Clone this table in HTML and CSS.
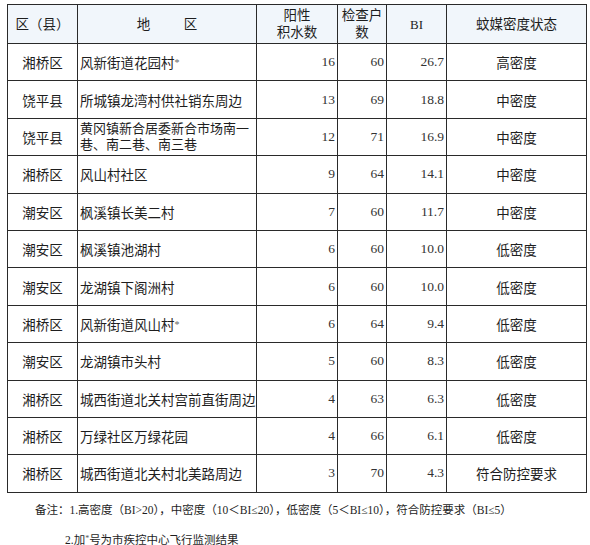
FILE: index.html
```html
<!DOCTYPE html>
<html lang="zh">
<head>
<meta charset="utf-8">
<title>蚊媒密度监测</title>
<link rel="stylesheet" href="styles.css">
</head>
<body>
<table class="grid">
  <colgroup>
    <col class="c1"><col class="c2"><col class="c3"><col class="c4"><col class="c5"><col class="c6">
  </colgroup>
  <thead>
    <tr class="head">
      <th>区（县）</th>
      <th>地&emsp;&emsp;&ensp;区</th>
      <th class="two">阳性<br>积水数</th>
      <th class="two">检查户<br>数</th>
      <th class="bi">BI</th>
      <th>蚊媒密度状态</th>
    </tr>
  </thead>
  <tbody>
    <tr><td class="ctr">湘桥区</td><td class="place">风新街道花园村<span class="star">*</span></td><td class="num">16</td><td class="num">60</td><td class="num">26.7</td><td class="ctr">高密度</td></tr>
    <tr><td class="ctr">饶平县</td><td class="place">所城镇龙湾村供社销东周边</td><td class="num">13</td><td class="num">69</td><td class="num">18.8</td><td class="ctr">中密度</td></tr>
    <tr><td class="ctr">饶平县</td><td class="place twoline">黄冈镇新合居委新合市场南一<br>巷、南二巷、南三巷</td><td class="num">12</td><td class="num">71</td><td class="num">16.9</td><td class="ctr">中密度</td></tr>
    <tr><td class="ctr">湘桥区</td><td class="place">风山村社区</td><td class="num">9</td><td class="num">64</td><td class="num">14.1</td><td class="ctr">中密度</td></tr>
    <tr><td class="ctr">潮安区</td><td class="place">枫溪镇长美二村</td><td class="num">7</td><td class="num">60</td><td class="num">11.7</td><td class="ctr">中密度</td></tr>
    <tr><td class="ctr">潮安区</td><td class="place">枫溪镇池湖村</td><td class="num">6</td><td class="num">60</td><td class="num">10.0</td><td class="ctr">低密度</td></tr>
    <tr><td class="ctr">潮安区</td><td class="place">龙湖镇下阁洲村</td><td class="num">6</td><td class="num">60</td><td class="num">10.0</td><td class="ctr">低密度</td></tr>
    <tr><td class="ctr">湘桥区</td><td class="place">风新街道风山村<span class="star">*</span></td><td class="num">6</td><td class="num">64</td><td class="num">9.4</td><td class="ctr">低密度</td></tr>
    <tr><td class="ctr">潮安区</td><td class="place">龙湖镇市头村</td><td class="num">5</td><td class="num">60</td><td class="num">8.3</td><td class="ctr">低密度</td></tr>
    <tr><td class="ctr">湘桥区</td><td class="place">城西街道北关村宫前直街周边</td><td class="num">4</td><td class="num">63</td><td class="num">6.3</td><td class="ctr">低密度</td></tr>
    <tr><td class="ctr">湘桥区</td><td class="place">万绿社区万绿花园</td><td class="num">4</td><td class="num">66</td><td class="num">6.1</td><td class="ctr">低密度</td></tr>
    <tr><td class="ctr">湘桥区</td><td class="place">城西街道北关村北美路周边</td><td class="num">3</td><td class="num">70</td><td class="num">4.3</td><td class="ctr">符合防控要求</td></tr>
  </tbody>
</table>
<div class="notes">
  <p class="note1">备注：1.高密度（BI&gt;20），中密度（10＜BI≤20），低密度（5＜BI≤10），符合防控要求（BI≤5）</p>
  <p class="note2">2.加<span class="mini">*</span>号为市疾控中心飞行监测结果</p>
</div>
</body>
</html>
```

FILE: styles.css
```css
html, body {
  margin: 0;
  padding: 0;
  background: #ffffff;
}
body {
  padding: 4px 0 0 7px;
  font-family: "Liberation Serif", "Noto Sans CJK SC", serif;
  color: #1e1e1e;
}
.grid {
  border-collapse: collapse;
  table-layout: fixed;
  width: 580px;
  font-size: 13.5px;
}
.c1 { width: 70px; }
.c2 { width: 179px; }
.c3 { width: 81px; }
.c4 { width: 49px; }
.c5 { width: 60px; }
.c6 { width: 140px; }
.grid th, .grid td {
  border: 1px solid #2a2a2a;
  padding: 0 2px;
  white-space: nowrap;
  overflow: hidden;
  vertical-align: middle;
}
.head {
  height: 39px;
  background: #f1f6fb;
}
.grid th {
  font-weight: normal;
  text-align: center;
  line-height: 17px;
}
.grid th.bi {
  font-size: 13px;
}
.grid tbody tr {
  height: 37.4px;
}
.ctr { text-align: center; }
.place { text-align: left; }
.twoline {
  line-height: 16px;
  font-size: 13px;
}
.num {
  text-align: right;
  font-size: 13.5px;
  color: #333333;
}
.star {
  font-size: 10px;
  color: #666666;
  vertical-align: 2px;
}
.notes {
  font-size: 11.5px;
}
.notes p {
  margin: 0;
  white-space: nowrap;
}
.note1 {
  padding: 10px 0 0 28px;
  line-height: 14px;
}
.note2 {
  padding: 15px 0 0 58px;
  line-height: 14px;
}
.mini {
  font-size: 8px;
  vertical-align: 3px;
  color: #555555;
}
```
